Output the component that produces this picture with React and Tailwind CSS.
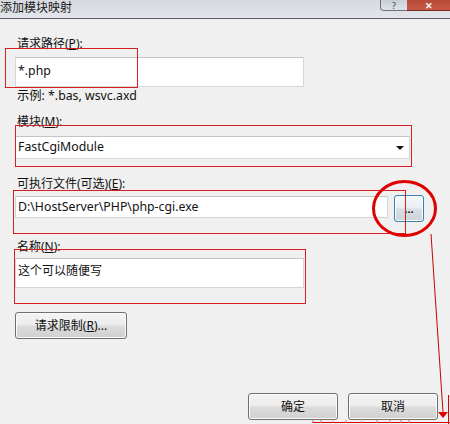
import React from "react";

const cjk = { fontFamily: '"Noto Sans", "Noto Sans CJK SC", sans-serif' };
const lat = { fontFamily: '"Noto Sans", "Noto Sans CJK SC", sans-serif' };

function WinButton({ children, className = "" }) {
  return (
    <div
      className={
        "flex items-center justify-center rounded-[3px] border border-[#707070] bg-[linear-gradient(to_bottom,#f4f4f4_0%,#ececec_48%,#dcdcdc_52%,#d0d0d0_100%)] text-[12px] text-[#111] shadow-[inset_0_0_0_1px_#fbfbfb] " +
        className
      }
      style={cjk}
    >
      {children}
    </div>
  );
}

export default function App() {
  return (
    <div className="relative h-[424px] w-[450px] overflow-hidden bg-[#f0f0f0] text-[#111]">
      {/* title bar */}
      <div className="relative h-[19px] border-b-[1.5px] border-[#5c5e62] bg-[linear-gradient(to_bottom,#d6d9de,#e2e5ea)]">
        <div className="pt-[1px] text-[12px] leading-[13px] text-[#1a1a1a]" style={cjk}>
          添加模块映射
        </div>
        <div className="absolute left-[380px] top-0 flex h-[11px] w-[28px] items-center justify-center rounded-bl-[4px] border border-t-0 border-[#6d7078] bg-[linear-gradient(to_bottom,#c9ced6,#dfe3e9)] text-[9px] leading-[9px] text-[#444]" style={lat}>
          ?
        </div>
        <div className="absolute left-[407px] top-0 flex h-[11px] w-[43px] items-center justify-center border-b border-[#7a2a20] bg-[linear-gradient(to_bottom,#b84a3a,#c85a44)] text-[9px] font-bold leading-[9px] text-white" style={lat}>
          ✕
        </div>
      </div>

      {/* body */}
      <div className="pl-[15px]">
        <div className="mt-[17px] h-[16px] pl-[2px] text-[12px] leading-[16px]" style={cjk}>
          请求路径(<span className="underline">P</span>):
        </div>
        <div className="mt-[5px] flex h-[30px] w-[289px] items-start border border-[#d6d6d6] border-t-[#c4c4c4] bg-white pl-[2px] pt-[5px] text-[12.3px] leading-[16px]" style={lat}>
          *.php
        </div>
        <div className="mt-[1px] h-[16px] pl-[2px] text-[12.3px] leading-[16px]" style={lat}>
          示例: *.bas, wsvc.axd
        </div>

        <div className="mt-[10px] h-[16px] pl-[2px] text-[12px] leading-[16px]" style={cjk}>
          模块(<span className="underline">M</span>):
        </div>
        <div className="mt-[6px] flex h-[23px] w-[395px] items-center justify-between border border-[#d6d6d6] border-t-[#c4c4c4] bg-white pl-[2px] pr-[5px] text-[12.3px]" style={lat}>
          <span>FastCgiModule</span>
          <svg width="8" height="4" viewBox="0 0 8 4">
            <path d="M0 0 H8 L4 4 Z" fill="#111" />
          </svg>
        </div>

        <div className="mt-[17px] h-[16px] pl-[2px] text-[12px] leading-[16px]" style={cjk}>
          可执行文件(可选)(<span className="underline">E</span>):
        </div>
        <div className="mt-[3px] flex items-start gap-[6px]">
          <div className="mt-[1px] flex h-[22px] w-[373px] items-center border border-[#d6d6d6] border-t-[#c4c4c4] bg-white pl-[2px] text-[12.3px]" style={lat}>
            D:\HostServer\PHP\php-cgi.exe
          </div>
          <div className="flex h-[27px] w-[30px] items-center justify-center rounded-[3px] border border-[#3c7fb1] bg-[linear-gradient(to_bottom,#f6f9fb_0%,#e9eef1_48%,#d8dfe3_52%,#ccd5da_100%)] shadow-[inset_0_0_0_1px_#f6fbfe] text-[11px] font-bold leading-[10px] text-[#111]" style={lat}>
            ...
          </div>
        </div>

        <div className="mt-[17px] h-[16px] pl-[2px] text-[12px] leading-[16px]" style={cjk}>
          名称(<span className="underline">N</span>):
        </div>
        <div className="mt-[3px] flex h-[30px] w-[289px] items-start border border-[#d6d6d6] border-t-[#c4c4c4] bg-white pl-[2px] pt-[4px] text-[12px] leading-[16px]" style={cjk}>
          这个可以随便写
        </div>

        <WinButton className="mt-[24px] h-[27px] w-[112px]">
          请求限制(<span className="underline">R</span>)...
        </WinButton>

        <div className="mt-[54px] flex gap-[10px] pl-[233px]">
          <WinButton className="h-[27px] w-[90px]">确定</WinButton>
          <WinButton className="h-[27px] w-[90px]">取消</WinButton>
        </div>
      </div>

      {/* red annotations */}
      <div className="pointer-events-none absolute left-[5px] top-[48px] h-[40px] w-[133px] border border-[#d42020]" />
      <div className="pointer-events-none absolute left-[15px] top-[125px] h-[42px] w-[397px] border border-[#d42020]" />
      <div className="pointer-events-none absolute left-[13px] top-[190px] h-[44px] w-[393px] border border-[#d42020]" />
      <div className="pointer-events-none absolute left-[14px] top-[249px] h-[55px] w-[292px] border border-[#d42020]" />
      <svg className="pointer-events-none absolute left-0 top-0" width="450" height="424" viewBox="0 0 450 424">
        <ellipse cx="404.5" cy="208.5" rx="31" ry="27" fill="none" stroke="#e00000" strokeWidth="3" />
        <path d="M431 234 L443 412" stroke="#d00000" strokeWidth="1" fill="none" />
        <path d="M438 412 L448 412 L443 418 Z" fill="#e00000" />
        <path d="M312 422.5 H450" stroke="#e00000" strokeWidth="1.2" />
        <path d="M448.5 395 V424" stroke="#e00000" strokeWidth="1" />
        <path d="M313 420 v3 M321 420 v3 M333 421 v2 M346 420 v3 M362 421 v2 M377 420 v3 M390 420 v3 M401 420 v3 M409 420 v3" stroke="#f07070" strokeWidth="1" />
      </svg>
    </div>
  );
}
